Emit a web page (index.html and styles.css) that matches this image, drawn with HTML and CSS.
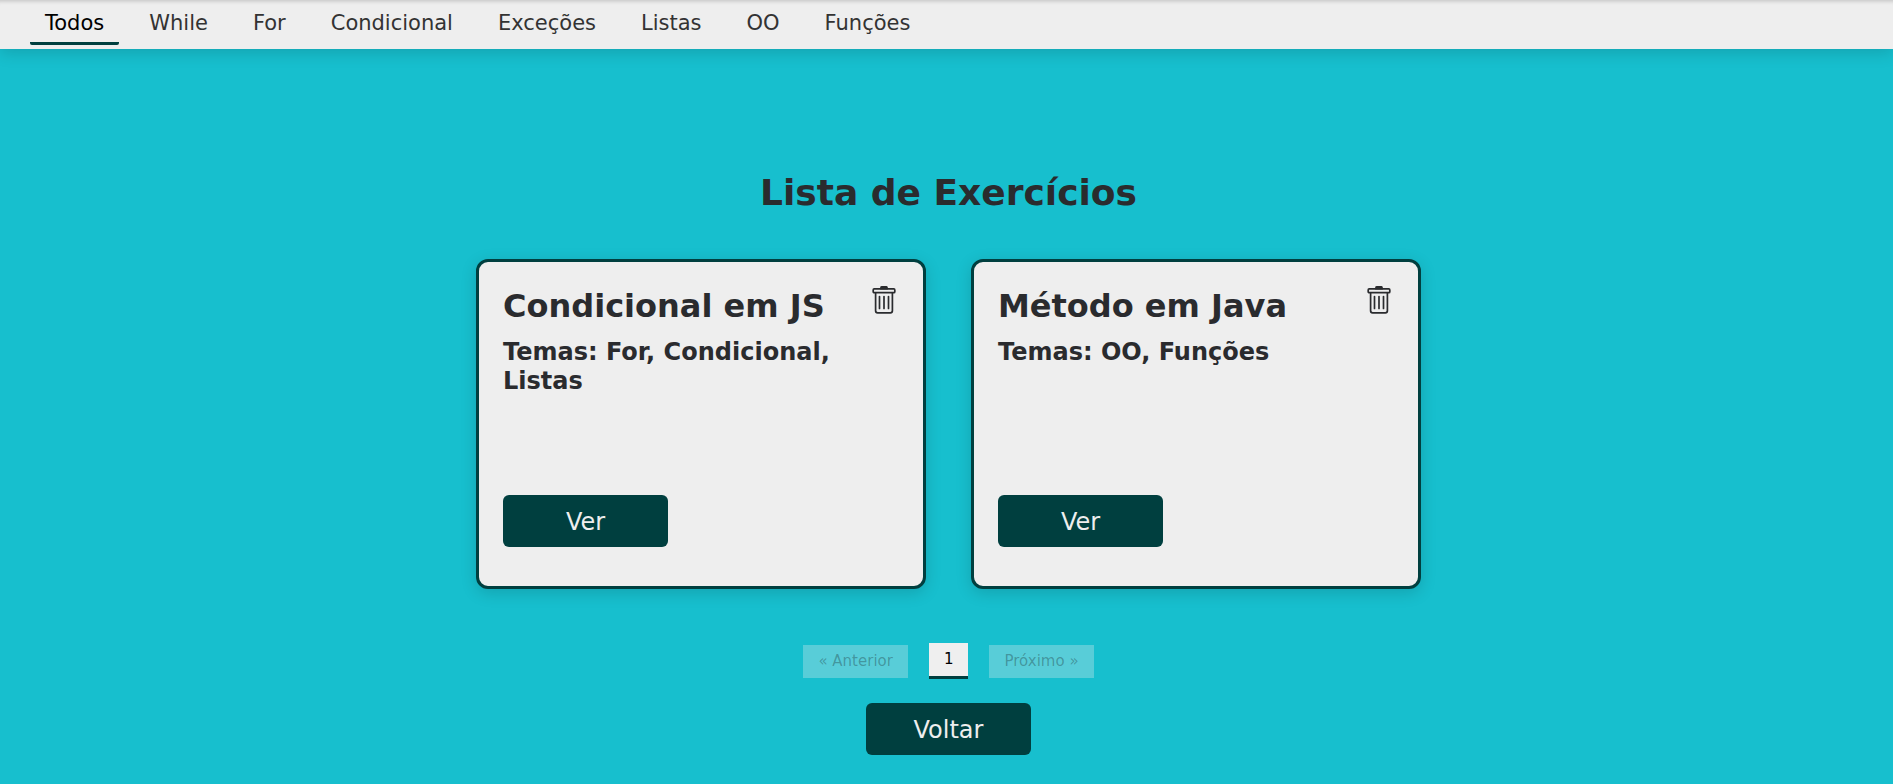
FILE: index.html
```html
<!DOCTYPE html>
<html lang="pt-BR">
<head>
<meta charset="utf-8">
<meta name="viewport" content="width=device-width, initial-scale=1">
<title>Lista de Exercícios</title>
<link rel="stylesheet" href="styles.css">
</head>
<body>
<nav class="tabs" aria-label="Temas">
  <button class="tab tab-active" type="button">Todos</button>
  <button class="tab" type="button">While</button>
  <button class="tab" type="button">For</button>
  <button class="tab" type="button">Condicional</button>
  <button class="tab" type="button">Exceções</button>
  <button class="tab" type="button">Listas</button>
  <button class="tab" type="button">OO</button>
  <button class="tab" type="button">Funções</button>
</nav>
<main class="content">
  <h1 class="title">Lista de Exercícios</h1>
  <div class="cards">
    <article class="card">
      <header class="card-head">
        <h2 class="card-title">Condicional em JS</h2>
        <button class="delete" type="button" aria-label="Excluir Condicional em JS">
          <svg class="trash" viewBox="0 0 24 28" fill="none" stroke="currentColor" stroke-width="1.7"><path d="M9 1.6Q9 .8 10 .8h4q1 0 1 .8v1H9z" fill="currentColor"/><rect x="1.2" y="2.9" width="21.6" height="3.8" rx="1"/><path d="M3.6 6.7v18.1q0 2 2 2h12.8q2 0 2-2V6.7"/><path d="M7.5 10.5v12M12 10.5v12M16.5 10.5v12" stroke-linecap="round"/></svg>
        </button>
      </header>
      <h3 class="topics">Temas: For, Condicional, Listas</h3>
      <button class="action card-action" type="button">Ver</button>
    </article>
    <article class="card">
      <header class="card-head">
        <h2 class="card-title">Método em Java</h2>
        <button class="delete" type="button" aria-label="Excluir Método em Java">
          <svg class="trash" viewBox="0 0 24 28" fill="none" stroke="currentColor" stroke-width="1.7"><path d="M9 1.6Q9 .8 10 .8h4q1 0 1 .8v1H9z" fill="currentColor"/><rect x="1.2" y="2.9" width="21.6" height="3.8" rx="1"/><path d="M3.6 6.7v18.1q0 2 2 2h12.8q2 0 2-2V6.7"/><path d="M7.5 10.5v12M12 10.5v12M16.5 10.5v12" stroke-linecap="round"/></svg>
        </button>
      </header>
      <h3 class="topics">Temas: OO, Funções</h3>
      <button class="action card-action" type="button">Ver</button>
    </article>
  </div>
  <nav class="pages" aria-label="Paginação">
    <button class="page" type="button" disabled>« Anterior</button>
    <button class="page page-current" type="button" aria-current="page">1</button>
    <button class="page" type="button" disabled>Próximo »</button>
  </nav>
  <button class="action" type="button">Voltar</button>
</main>
</body>
</html>
```
FILE: styles.css
```css
* {
  box-sizing: border-box;
}

body {
  margin: 0;
  min-height: 100vh;
  background: #17bfce;
  color: #2a2b2e;
  font-family: "DejaVu Sans", Verdana, sans-serif;
}

h1, h2, h3 {
  margin: 0;
}

button {
  border: 0;
  font-family: inherit;
  cursor: pointer;
}

.tabs {
  display: flex;
  gap: 15px;
  padding: 0 30px 4px;
  background: #eee;
  box-shadow: 0 4px 16px rgba(0, 0, 0, 0.15), inset 0 5px 4px -4px rgba(0, 0, 0, 0.2);
}

.tab {
  padding: 10px 15px 6px;
  border-bottom: 3px solid transparent;
  border-radius: 2px;
  background: transparent;
  color: #333;
  font-size: 21px;
  line-height: 26px;
}

.tab-active {
  border-bottom-color: #003f3f;
  color: #000;
}

.content {
  display: flex;
  flex-direction: column;
  align-items: center;
  padding: 121px 0 28px 4px;
}

.title {
  font-size: 36px;
  line-height: 46px;
}

.cards {
  display: flex;
  flex-wrap: wrap;
  justify-content: center;
  gap: 45px;
  margin-top: 43px;
}

.card {
  display: flex;
  flex-direction: column;
  align-items: flex-start;
  width: 450px;
  min-height: 330px;
  padding: 24px 24px 39px;
  border: 3px solid #003f3f;
  border-radius: 12px;
  background: #eee;
  box-shadow: 0 4px 16px rgba(0, 0, 0, 0.15);
}

.card-head {
  display: flex;
  justify-content: space-between;
  align-items: flex-start;
  width: 100%;
}

.card-title {
  font-size: 32px;
  line-height: 40px;
}

.delete {
  padding: 0 3px;
  background: transparent;
  color: #2a2b2e;
}

.trash {
  display: block;
  width: 24px;
  height: 28px;
}

.topics {
  margin-top: 12px;
  font-size: 24px;
  line-height: 29px;
}

.action {
  width: 165px;
  height: 52px;
  padding: 2px 0 0;
  border-radius: 6px;
  background: #003f3f;
  color: #eee;
  font-size: 24px;
}

.card-action {
  margin-top: auto;
}

.pages {
  display: flex;
  align-items: center;
  gap: 21px;
  margin: 54px 0 24px;
}

.page {
  padding: 8px 15px;
  background: #efefef;
  font-size: 15px;
  line-height: 17px;
}

.page:disabled {
  background: rgba(239, 239, 239, 0.3);
  color: rgba(16, 16, 16, 0.3);
}

.page-current {
  border-bottom: 3px solid #003f3f;
  color: #000;
}
```
